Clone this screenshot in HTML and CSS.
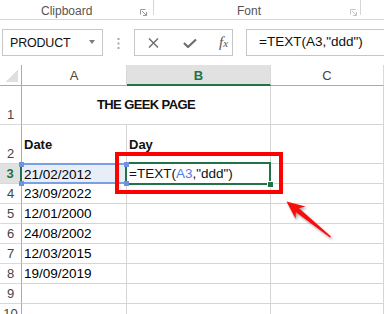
FILE: index.html
```html
<!DOCTYPE html>
<html>
<head>
<meta charset="utf-8">
<link rel="stylesheet" href="styles.css">
</head>
<body>
<div class="ribbon">
  <div class="grp g1"><span class="glabel">Clipboard</span><span class="launch"><svg width="7" height="7" viewBox="0 0 7 7"><path d="M0.5 0.5H5.5M0.5 0.5V5.5" stroke="#9a9a9a" fill="none"/><path d="M2 2L6.5 6.5M6.5 3V6.5H3" stroke="#9a9a9a" fill="none"/></svg></span></div>
  <div class="sep"></div>
  <div class="grp g2"><span class="glabel">Font</span><span class="launch"><svg width="7" height="7" viewBox="0 0 7 7"><path d="M0.5 0.5H5.5M0.5 0.5V5.5" stroke="#c4c4c4" fill="none"/><path d="M2 2L6.5 6.5M6.5 3V6.5H3" stroke="#c4c4c4" fill="none"/></svg></span></div>
  <div class="sep"></div>
</div>

<div class="fbar">
  <div class="namebox"><span class="nbtext">PRODUCT</span><span class="caret"></span></div>
  <svg class="dots" width="3" height="11" viewBox="0 0 3 11"><rect x="0.5" y="0" width="2" height="2" fill="#a8a8a8"/><rect x="0.5" y="4.5" width="2" height="2" fill="#a8a8a8"/><rect x="0.5" y="9" width="2" height="2" fill="#a8a8a8"/></svg>
  <div class="fbtns">
    <svg class="ic-x" width="11" height="10" viewBox="0 0 11 10"><path d="M1 0.5L10 9.5M10 0.5L1 9.5" stroke="#6d6d6d" stroke-width="1.4" fill="none"/></svg>
    <svg class="ic-ok" width="14" height="10" viewBox="0 0 14 10"><path d="M1 5L5 9L13 1.5" stroke="#6d6d6d" stroke-width="2.2" fill="none" stroke-linejoin="round"/></svg>
    <span class="fx">f<span class="fxx">x</span></span>
  </div>
  <div class="finput">=TEXT(A3,"ddd")</div>
</div>

<div class="sheet">
  <div class="corner"><span class="tri"></span></div>
  <div class="ch">A</div>
  <div class="ch ch-sel">B</div>
  <div class="ch">C</div>
  <div class="ch ch-last"></div>

  <div class="rh">1</div>
  <div class="c merged title">THE GEEK PAGE</div>
  <div class="c"></div>
  <div class="c c-last"></div>

  <div class="rh">2</div>
  <div class="c bold">Date</div>
  <div class="c bold colb">Day</div>
  <div class="c"></div>
  <div class="c c-last"></div>

  <div class="rh rh-sel">3</div>
  <div class="c rangesel">21/02/2012<span class="hd h-tl"></span><span class="hd h-tr"></span><span class="hd h-br"></span><span class="hd h-bl"></span></div>
  <div class="c colb active">=TEXT(<span class="ref">A3</span>,"ddd")<span class="act-border"></span><span class="fill-handle"></span></div>
  <div class="c"></div>
  <div class="c c-last"></div>

  <div class="rh">4</div>
  <div class="c">23/09/2022</div>
  <div class="c"></div>
  <div class="c"></div>
  <div class="c c-last"></div>

  <div class="rh">5</div>
  <div class="c">12/01/2000</div>
  <div class="c"></div>
  <div class="c"></div>
  <div class="c c-last"></div>

  <div class="rh">6</div>
  <div class="c">24/08/2002</div>
  <div class="c"></div>
  <div class="c"></div>
  <div class="c c-last"></div>

  <div class="rh">7</div>
  <div class="c">12/03/2015</div>
  <div class="c"></div>
  <div class="c"></div>
  <div class="c c-last"></div>

  <div class="rh">8</div>
  <div class="c">19/09/2019</div>
  <div class="c"></div>
  <div class="c"></div>
  <div class="c c-last"></div>

  <div class="rh">9</div>
  <div class="c"></div>
  <div class="c"></div>
  <div class="c"></div>
  <div class="c c-last"></div>

  <div class="rh">10</div>
  <div class="c"></div>
  <div class="c"></div>
  <div class="c"></div>
  <div class="c c-last"></div>
</div>

<div class="redbox"></div>
<svg class="arrow" width="70" height="60" viewBox="280 195 70 60">
  <defs>
    <filter id="sh" x="-30%" y="-30%" width="160%" height="160%">
      <feDropShadow dx="1.5" dy="2" stdDeviation="1.2" flood-color="#000" flood-opacity="0.35"/>
    </filter>
  </defs>
  <polygon filter="url(#sh)" fill="#f80e0e" points="286.5,201.5 305.6,206.5 299.1,208.2 331,236.4 330,237.6 295.9,212.3 295.6,219"/>
</svg>
</body>
</html>
```

FILE: styles.css
```css
html, body {
  margin: 0;
  padding: 0;
}
body {
  width: 384px;
  height: 314px;
  overflow: hidden;
  background: #ffffff;
  position: relative;
  font-family: "Liberation Sans", Arial, sans-serif;
  color: #000;
}

/* ribbon */
.ribbon {
  display: flex;
  align-items: flex-start;
  height: 19px;
  border-bottom: 1px solid #d6d6d6;
  background: #ffffff;
}
.grp {
  display: flex;
  align-items: flex-start;
  height: 19px;
  box-sizing: border-box;
  padding-top: 4px;
}
.g1 { width: 153px; }
.g2 { width: 206px; }
.glabel {
  font-size: 12px;
  line-height: 14px;
  color: #555;
}
.g1 .glabel { margin-left: 41px; }
.g2 .glabel { margin-left: 83px; }
.launch {
  margin-left: auto;
  margin-top: 5px;
  width: 7px;
  height: 7px;
  display: block;
}
.launch svg { display: block; }
.g1 .launch { margin-right: 6px; }
.g2 .launch { margin-right: 3px; }
.sep {
  width: 1px;
  height: 15px;
  background: #d6d6d6;
}

/* formula bar */
.fbar {
  display: flex;
  align-items: flex-start;
  height: 45px;
  box-sizing: border-box;
  padding-top: 9px;
}
.namebox {
  margin-left: 2px;
  width: 101px;
  height: 27px;
  box-sizing: border-box;
  border: 1px solid #c6c6c6;
  display: flex;
  align-items: center;
  padding-left: 7px;
  padding-right: 7px;
}
.nbtext {
  font-size: 12.5px;
  letter-spacing: -0.2px;
  color: #111;
}
.caret {
  margin-left: auto;
  width: 0;
  height: 0;
  border-left: 3.5px solid transparent;
  border-right: 3.5px solid transparent;
  border-top: 4px solid #7b7b7b;
  margin-bottom: 2px;
}
.dots {
  display: block;
  margin-left: 14px;
  margin-top: 9px;
}
.fbtns {
  margin-left: 14px;
  width: 99px;
  height: 27px;
  box-sizing: border-box;
  border: 1px solid #c6c6c6;
  display: flex;
  align-items: center;
  padding-left: 13px;
}
.ic-x { display: block; }
.ic-ok { display: block; margin-left: 24px; }
.fx {
  margin-left: 22px;
  font-family: "Liberation Serif", "Times New Roman", serif;
  font-style: italic;
  font-size: 15px;
  color: #555;
  line-height: 15px;
}
.fxx {
  font-size: 11px;
}
.finput {
  margin-left: 13px;
  flex: 1;
  height: 27px;
  box-sizing: border-box;
  border: 1px solid #c6c6c6;
  border-right: none;
  padding-left: 12px;
  font-size: 13.5px;
  line-height: 24px;
  color: #111;
}

/* sheet */
.sheet {
  display: grid;
  grid-template-columns: 22px 105px 144px 113px 0px;
  grid-template-rows: 21px 39px 39px repeat(8, 20px);
}
.sheet > div {
  box-sizing: border-box;
  border-right: 1px solid #d4d4d4;
  border-bottom: 1px solid #d4d4d4;
}
.corner {
  border-right: 1px solid #ababab !important;
  border-bottom: 1px solid #ababab !important;
  display: flex;
  align-items: flex-end;
  justify-content: flex-end;
  padding: 0 3px 3px 0;
}
.tri {
  width: 13px;
  height: 13px;
  background: linear-gradient(to bottom right, transparent 50%, #dfdfdf 50%);
}
.ch {
  border-bottom: 1px solid #ababab !important;
  border-right: 1px solid #d9d9d9 !important;
  display: flex;
  align-items: center;
  justify-content: center;
  font-size: 13px;
  color: #444;
  padding-top: 1px;
}
.ch-sel {
  background: #e1e1e1;
  border-bottom: 2px solid #217346 !important;
  color: #217346;
  font-weight: bold;
}
.ch-last, .c-last {
  border-right: none !important;
}
.rh {
  border-right: 1px solid #ababab !important;
  border-bottom: 1px solid #d9d9d9 !important;
  display: flex;
  align-items: flex-end;
  justify-content: center;
  font-size: 13px;
  line-height: 14px;
  color: #444;
  padding-bottom: 2px;
}
.rh-sel {
  background: #e1e1e1;
  color: #217346;
  font-weight: bold;
  border-right: 2px solid #217346 !important;
}
.c {
  display: flex;
  align-items: center;
  padding-left: 2px;
  font-size: 13.5px;
  white-space: nowrap;
  position: relative;
}
.colb { padding-left: 2px; }
.merged {
  grid-column: span 2;
  justify-content: center;
}
.title {
  font-weight: bold;
  font-size: 13px;
  letter-spacing: -0.6px;
  padding-left: 0;
  padding-bottom: 1px;
  color: #111;
}
.bold {
  font-weight: bold;
  font-size: 13px;
  color: #111;
}
.rangesel {
  background: #e8eef8;
  border-top: 1px solid #7b9fe6;
  box-shadow: inset 0 -1px 0 #7b9fe6, 0 -1px 0 #7b9fe6;
  border-bottom: 1px solid #7b9fe6 !important;
  overflow: visible;
}
.hd {
  position: absolute;
  width: 5px;
  height: 5px;
  background: #6d92e0;
  z-index: 3;
}
.h-tl { left: -3px; top: -3px; }
.h-tr { right: -3px; top: -3px; }
.h-br { right: -3px; bottom: -3px; }
.h-bl { left: -3px; bottom: -3px; }
.active { color: #111; }
.ref { color: #4f7fe0; }
.act-border {
  position: absolute;
  left: -2px;
  top: -2px;
  right: -1px;
  bottom: -2px;
  border: 2px solid #217346;
  z-index: 2;
}
.fill-handle {
  position: absolute;
  right: -4px;
  bottom: -5px;
  width: 5px;
  height: 5px;
  background: #217346;
  border: 1px solid #fff;
  z-index: 4;
}

/* overlays */
.redbox {
  position: absolute;
  left: 115px;
  top: 152px;
  width: 168px;
  height: 42px;
  box-sizing: border-box;
  border: 4px solid #fe0000;
  z-index: 5;
}
.arrow {
  position: absolute;
  left: 280px;
  top: 195px;
  z-index: 6;
}
```
